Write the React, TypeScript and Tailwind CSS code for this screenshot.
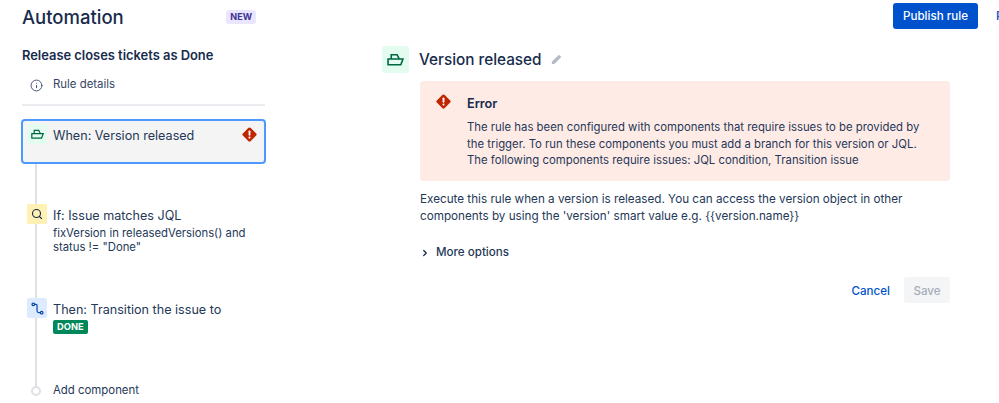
import { ChevronRight, Info, Search } from "lucide-react";

const ShipIcon = ({ className }: { className: string }) => (
  <svg viewBox="0 0 16 12" fill="none" stroke="currentColor" strokeWidth="1.5" className={className}>
    <path d="M4 5.5V1.5h5.5l2 4" />
    <path d="M1 5.5h14l-2 5.5H1z" />
  </svg>
);

const ErrorIcon = ({ className }: { className: string }) => (
  <svg viewBox="0 0 16 16" className={className}>
    <path d="M8 0.4a1.6 1.6 0 0 1 1.1.5l6 6a1.6 1.6 0 0 1 0 2.2l-6 6a1.6 1.6 0 0 1-2.2 0l-6-6a1.6 1.6 0 0 1 0-2.2l6-6A1.6 1.6 0 0 1 8 .4z" fill="#bf2600" />
    <rect x="7" y="3.6" width="2" height="5.6" rx="1" fill="#fff" />
    <circle cx="8" cy="11.3" r="1.1" fill="#fff" />
  </svg>
);

const TransitionIcon = () => (
  <svg viewBox="0 0 14 14" fill="none" stroke="#0747a6" strokeWidth="1.3" className="h-[13px] w-[13px]">
    <circle cx="2.5" cy="2.5" r="1.4" />
    <circle cx="11.5" cy="11.5" r="1.4" />
    <path d="M4 2.5h1.5a1 1 0 0 1 1 1v6a2 2 0 0 0 2 2H10" />
  </svg>
);

const App = () => {
  return (
    <div className="flex h-[403px] w-[999px] overflow-hidden bg-white font-['Inter',sans-serif] text-[13px] text-[#253858] antialiased">
      <aside className="relative ml-[21px] w-[245px] shrink-0">
        <div className="flex h-[34px] items-center justify-between pl-px pr-[10px]">
          <h1 className="text-[18.5px] font-medium leading-none text-[#172b4d]">Automation</h1>
          <span className="rounded-[3px] bg-[#eae6ff] px-[4px] py-[1px] text-[9px] font-bold leading-[12px] text-[#403294]">NEW</span>
        </div>
        <h2 className="ml-px mt-[13px] text-[12.9px] font-semibold leading-[18px] text-[#172b4d]">Release closes tickets as Done</h2>
        <div className="ml-[9px] mt-[11px] flex h-[18px] items-center gap-[10px]">
          <Info className="h-[13px] w-[13px] text-[#42526e]" strokeWidth={1.8} />
          <span className="text-[11.4px] text-[#344563]">Rule details</span>
        </div>
        <div className="ml-px mr-[1px] mt-[10px] h-[2px] bg-[#ebecf0]" />

        <div className="absolute bottom-[12px] left-[14px] top-[144px] w-[2px] bg-[#dfe1e6]" />

        <div className="relative mt-[13px] flex h-[45px] items-start rounded-[4px] border-2 border-[#4c9aff] bg-[#f4f4f4] pl-[4px] pr-[7px] pt-[3px]">
          <div className="flex h-[20px] w-[20px] items-center justify-center rounded-[2px] bg-[#e3fcef]">
            <ShipIcon className="h-[10px] w-[13px] text-[#006644]" />
          </div>
          <span className="ml-[6px] mt-[2px] text-[12.6px] leading-[20px] text-[#253858]">When: Version released</span>
          <ErrorIcon className="ml-auto mt-[3px] h-[15px] w-[15px]" />
        </div>

        <div className="relative mt-[40px] flex h-[94px] items-start pl-[6px]">
          <div className="flex h-[20px] w-[20px] items-center justify-center rounded-[2px] bg-[#fff0b3]">
            <Search className="h-[12px] w-[12px] text-[#172b4d]" strokeWidth={2.2} />
          </div>
          <div className="ml-[6px] mt-[2px]">
            <div className="text-[12.6px] leading-[20px]">If: Issue matches JQL</div>
            <div className="w-[205px] text-[11.3px] leading-[14px]">fixVersion in releasedVersions() and status != "Done"</div>
          </div>
        </div>

        <div className="relative flex h-[81px] items-start pl-[6px]">
          <div className="flex h-[20px] w-[20px] items-center justify-center rounded-[2px] bg-[#deebff]">
            <TransitionIcon />
          </div>
          <div className="ml-[6px] mt-[2px]">
            <div className="text-[12.6px] leading-[20px]">Then: Transition the issue to</div>
            <span className="block w-fit rounded-[2px] bg-[#00875a] px-[4px] text-[9.3px] font-bold leading-[14px] text-white">DONE</span>
          </div>
        </div>

        <div className="relative mt-[4px] flex h-[16px] items-center pl-[10px]">
          <div className="h-[10px] w-[10px] rounded-full border-2 border-[#dfe1e6] bg-white" />
          <span className="ml-[12px] text-[11.4px]">Add component</span>
        </div>
      </aside>

      <main className="ml-[116px] w-[617px] shrink-0">
        <div className="flex h-[46px] items-start justify-end pt-[3px]">
          <button className="h-[26px] w-[85px] rounded-[3px] bg-[#0052cc] pt-[2px] text-[11.6px] font-medium text-white">Publish rule</button>
          <span className="ml-[18px] mt-[4px] w-[3px] overflow-hidden text-[12px] font-medium leading-[18px] text-[#0052cc]">P</span>
        </div>

        <div className="flex h-[27px] items-center">
          <div className="flex h-[27px] w-[27px] items-center justify-center rounded-[3px] bg-[#e3fcef]">
            <ShipIcon className="h-[13px] w-[17px] text-[#006644]" />
          </div>
          <h2 className="ml-[10px] mt-[2px] text-[15.3px] font-medium text-[#172b4d]">Version released</h2>
          <svg viewBox="0 0 12 12" className="ml-[9px] h-[11px] w-[11px]">
            <path d="M8.6.8l2.6 2.6-7.2 7.2-3.3.7.7-3.3z" fill="#b3bac5" />
          </svg>
        </div>

        <div className="ml-[38px] mt-[8px] w-[530px]">
          <div className="flex h-[100px] rounded-[3px] bg-[#ffebe6] pl-[16px] pt-[15px]">
            <ErrorIcon className="mt-[-2px] h-[15px] w-[15px]" />
            <div className="ml-[16px]">
              <div className="text-[12.7px] font-semibold leading-[16px] text-[#172b4d]">Error</div>
              <p className="mt-[7px] w-[470px] text-[11.35px] leading-[16.5px] text-[#253858]">
                The rule has been configured with components that require issues to be provided by the trigger. To run these components you must add a branch for this version or JQL. The following components require issues: JQL condition, Transition issue
              </p>
            </div>
          </div>

          <p className="mt-[10px] w-[500px] text-[11.7px] leading-[17px] text-[#253858]">
            Execute this rule when a version is released. You can access the version object in other components by using the 'version' smart value e.g. {"{{version.name}}"}
          </p>

          <div className="mt-[19px] flex h-[18px] items-center">
            <ChevronRight className="h-[10px] w-[10px] text-[#172b4d]" strokeWidth={3} />
            <span className="ml-[6px] text-[11.6px] font-medium text-[#253858]">More options</span>
          </div>

          <div className="mt-[15px] flex items-center justify-end">
            <button className="mt-[4px] text-[11.6px] font-medium text-[#0052cc]">Cancel</button>
            <button className="ml-[14px] h-[26px] w-[46px] rounded-[3px] bg-[#f4f5f7] pt-[3px] text-[11.6px] font-medium text-[#a5adba]">Save</button>
          </div>
        </div>
      </main>
    </div>
  );
};

export default App;
